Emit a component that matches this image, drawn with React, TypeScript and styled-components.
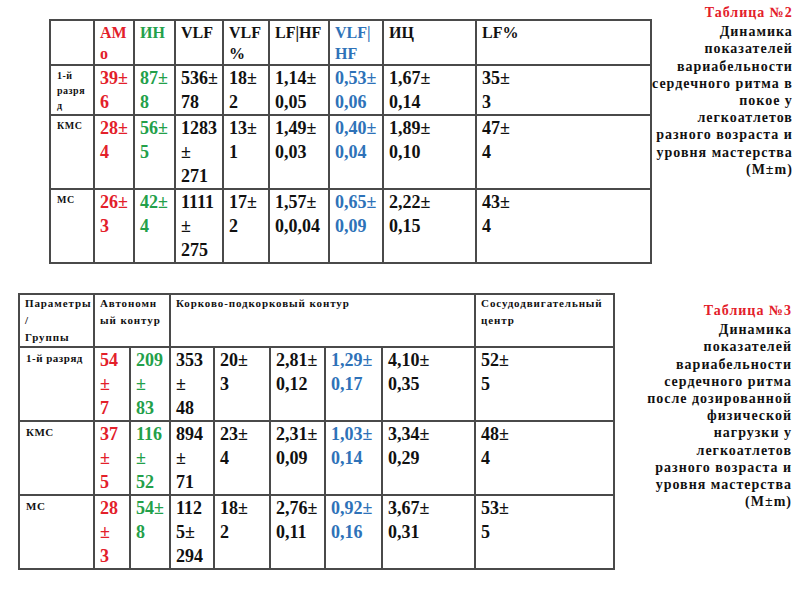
import React from "react";
import styled, { createGlobalStyle } from "styled-components";

const SERIF = `"Liberation Serif", "Times New Roman", Tinos, serif`;

const GlobalStyle = createGlobalStyle`
  html, body { margin: 0; padding: 0; background: #ffffff; }
  body { font-family: ${SERIF}; }
  table { font-family: ${SERIF}; }
`;

const RED = "#e3202a";
const GREEN = "#23a04a";
const BLUE = "#2e72b8";
const LINE = "#4a4a4a";

type Tone = "red" | "green" | "blue" | undefined;
const toneColor = (t: Tone) =>
  t === "red" ? RED : t === "green" ? GREEN : t === "blue" ? BLUE : "#111111";

const Page = styled.div`
  width: 800px;
  height: 600px;
  display: flex;
  flex-direction: column;
  overflow: hidden;
  color: #111;
  font-family: ${SERIF};
`;

const Section = styled.section<{ $h: number; $pl: number }>`
  height: ${(p) => p.$h}px;
  padding-left: ${(p) => p.$pl}px;
  display: flex;
  align-items: flex-start;
  flex-shrink: 0;
`;

const Table = styled.table<{ $w: number; $mt: number }>`
  width: ${(p) => p.$w}px;
  margin-top: ${(p) => p.$mt}px;
  border-collapse: collapse;
  table-layout: fixed;
  flex-shrink: 0;
  font-family: ${SERIF};
`;

const Row = styled.tr<{ $h: number }>`
  height: ${(p) => p.$h}px;
`;

const BaseCell = styled.td`
  border: 2px solid ${LINE};
  vertical-align: top;
  padding: 0 3px 0 5px;
  font-family: ${SERIF};
  font-weight: 700;
  white-space: nowrap;
  overflow: hidden;
`;

const DataCell = styled(BaseCell)<{ $tone?: Tone }>`
  font-size: 18px;
  line-height: 24px;
  color: ${(p) => toneColor(p.$tone)};
`;

const HeadCell = styled(BaseCell)<{ $tone?: Tone }>`
  font-size: 16px;
  line-height: 21px;
  padding-top: 1px;
  color: ${(p) => toneColor(p.$tone)};
`;

const SmallHead = styled(BaseCell)`
  font-size: 11px;
  line-height: 17px;
  letter-spacing: 0.9px;
  padding-top: 0;
`;

const LabelCell = styled(BaseCell)<{ $lh: number; $fs: number }>`
  font-size: ${(p) => p.$fs}px;
  line-height: ${(p) => p.$lh}px;
  letter-spacing: 0.5px;
  padding-top: 2px;
  padding-left: 6px;
`;

const Line = styled.span`
  display: block;
`;

const Caption = styled.div<{ $mt: number }>`
  margin-left: auto;
  margin-right: 8px;
  margin-top: ${(p) => p.$mt}px;
  text-align: right;
  font-family: ${SERIF};
  font-weight: 700;
  font-size: 14px;
  line-height: 17.2px;
  letter-spacing: 1px;
  color: #111;
  white-space: nowrap;
`;

const CaptionTitle = styled.div`
  color: ${RED};
  margin-bottom: 2px;
`;

type CellData = { lines: string[]; tone?: Tone };

const Lines = ({ lines }: { lines: string[] }) => (
  <>
    {lines.map((l, i) => (
      <Line key={i}>{l}</Line>
    ))}
  </>
);

const tones: Tone[] = ["red", "green", undefined, undefined, undefined, "blue", undefined, undefined];

const t1Cols = [44, 40, 41, 48, 46, 60, 54, 93, 175];
const t1Head: CellData[] = [
  { lines: ["АМ", "о"], tone: "red" },
  { lines: ["ИН"], tone: "green" },
  { lines: ["VLF"] },
  { lines: ["VLF", "%"] },
  { lines: ["LF|HF"] },
  { lines: ["VLF|", "HF"], tone: "blue" },
  { lines: ["ИЦ"] },
  { lines: ["LF%"] },
];
const t1Rows: { label: string[]; h: number; cells: string[][] }[] = [
  {
    label: ["1-й", "разря", "д"],
    h: 48,
    cells: [
      ["39±", "6"],
      ["87±", "8"],
      ["536±", "78"],
      ["18±", "2"],
      ["1,14±", "0,05"],
      ["0,53±", "0,06"],
      ["1,67±", "0,14"],
      ["35±", "3"],
    ],
  },
  {
    label: ["КМС"],
    h: 74,
    cells: [
      ["28±", "4"],
      ["56±", "5"],
      ["1283", "±", "271"],
      ["13±", "1"],
      ["1,49±", "0,03"],
      ["0,40±", "0,04"],
      ["1,89±", "0,10"],
      ["47±", "4"],
    ],
  },
  {
    label: ["МС"],
    h: 74,
    cells: [
      ["26±", "3"],
      ["42±", "4"],
      ["1111", "±", "275"],
      ["17±", "2"],
      ["1,57±", "0,0,04"],
      ["0,65±", "0,09"],
      ["2,22±", "0,15"],
      ["43±", "4"],
    ],
  },
];

const t2Cols = [75, 36, 40, 44, 56, 55, 57, 93, 139];
const t2Rows: { label: string; cells: string[][]; h: number }[] = [
  {
    label: "1-й разряд",
    h: 73,
    cells: [
      ["54", "±", "7"],
      ["209", "±", "83"],
      ["353", "±", "48"],
      ["20±", "3"],
      ["2,81±", "0,12"],
      ["1,29±", "0,17"],
      ["4,10±", "0,35"],
      ["52±", "5"],
    ],
  },
  {
    label: "КМС",
    h: 74,
    cells: [
      ["37", "±", "5"],
      ["116", "±", "52"],
      ["894", "±", "71"],
      ["23±", "4"],
      ["2,31±", "0,09"],
      ["1,03±", "0,14"],
      ["3,34±", "0,29"],
      ["48±", "4"],
    ],
  },
  {
    label: "МС",
    h: 74,
    cells: [
      ["28", "±", "3"],
      ["54±", "8"],
      ["112", "5±", "294"],
      ["18±", "2"],
      ["2,76±", "0,11"],
      ["0,92±", "0,16"],
      ["3,67±", "0,31"],
      ["53±", "5"],
    ],
  },
];

const Cols = ({ widths }: { widths: number[] }) => (
  <colgroup>
    {widths.map((w, i) => (
      <col key={i} style={{ width: w }} />
    ))}
  </colgroup>
);

const sum = (a: number[]) => a.reduce((x, y) => x + y, 0);

export default function App() {
  return (
    <Page>
      <GlobalStyle />
      <Section $h={280} $pl={49}>
        <Table $w={sum(t1Cols)} $mt={19}>
          <Cols widths={t1Cols} />
          <tbody>
            <Row $h={43}>
              <HeadCell />
              {t1Head.map((c, i) => (
                <HeadCell key={i} $tone={c.tone}>
                  <Lines lines={c.lines} />
                </HeadCell>
              ))}
            </Row>
            {t1Rows.map((r, ri) => (
              <Row key={ri} $h={r.h}>
                <LabelCell $fs={10} $lh={15}>
                  <Lines lines={r.label} />
                </LabelCell>
                {r.cells.map((c, ci) => (
                  <DataCell key={ci} $tone={tones[ci]}>
                    <Lines lines={c} />
                  </DataCell>
                ))}
              </Row>
            ))}
          </tbody>
        </Table>
        <Caption $mt={4}>
          <CaptionTitle>Таблица №2</CaptionTitle>
          <Lines
            lines={[
              "Динамика",
              "показателей",
              "вариабельности",
              "сердечного ритма в",
              "покое у",
              "легкоатлетов",
              "разного возраста и",
              "уровня мастерства",
              "(M±m)",
            ]}
          />
        </Caption>
      </Section>
      <Section $h={320} $pl={18}>
        <Table $w={sum(t2Cols)} $mt={13}>
          <Cols widths={t2Cols} />
          <tbody>
            <Row $h={51}>
              <SmallHead>
                <Lines lines={["Параметры", "/", "Группы"]} />
              </SmallHead>
              <SmallHead colSpan={2}>
                <Lines lines={["Автономн", "ый контур"]} />
              </SmallHead>
              <SmallHead colSpan={5}>
                <Lines lines={["Корково-подкорковый контур"]} />
              </SmallHead>
              <SmallHead>
                <Lines lines={["Сосудодвигательный", "центр"]} />
              </SmallHead>
            </Row>
            {t2Rows.map((r, ri) => (
              <Row key={ri} $h={r.h}>
                <LabelCell $fs={11} $lh={16}>
                  <Lines lines={[r.label]} />
                </LabelCell>
                {r.cells.map((c, ci) => (
                  <DataCell key={ci} $tone={tones[ci]}>
                    <Lines lines={c} />
                  </DataCell>
                ))}
              </Row>
            ))}
          </tbody>
        </Table>
        <Caption $mt={22}>
          <CaptionTitle>Таблица №3</CaptionTitle>
          <Lines
            lines={[
              "Динамика",
              "показателей",
              "вариабельности",
              "сердечного ритма",
              "после дозированной",
              "физической",
              "нагрузки у",
              "легкоатлетов",
              "разного возраста и",
              "уровня мастерства",
              "(M±m)",
            ]}
          />
        </Caption>
      </Section>
    </Page>
  );
}
